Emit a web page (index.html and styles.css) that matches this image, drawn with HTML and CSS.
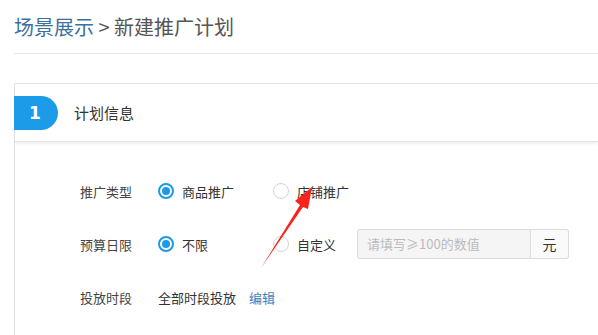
FILE: index.html
```html
<!DOCTYPE html>
<html lang="zh-CN">
<head>
<meta charset="utf-8">
<title>新建推广计划</title>
<link rel="stylesheet" href="styles.css">
</head>
<body>
<div class="page">
  <div class="crumb"><span class="crumb-link">场景展示</span><span class="crumb-cur"> &gt; 新建推广计划</span></div>
  <div class="card">
    <div class="card-head">
      <div class="step">1</div>
      <div class="step-title">计划信息</div>
    </div>
    <div class="form">
      <div class="row">
        <div class="label">推广类型</div>
        <div class="opt"><span class="radio on"></span><span>商品推广</span></div>
        <div class="opt"><span class="radio"></span><span>店铺推广</span></div>
      </div>
      <div class="row">
        <div class="label">预算日限</div>
        <div class="opt"><span class="radio on"></span><span>不限</span></div>
        <div class="opt opt-short"><span class="radio"></span><span>自定义</span></div>
        <div class="group">
          <div class="input">请填写≥100的数值</div>
          <div class="addon">元</div>
        </div>
      </div>
      <div class="row">
        <div class="label">投放时段</div>
        <span class="val">全部时段投放</span><span class="link">编辑</span>
      </div>
    </div>
  </div>
</div>
<svg class="arrow" width="598" height="335" viewBox="0 0 598 335">
  <polygon points="261,268 300,205 295,201 312,187 308,209 303,207" fill="#f7241b"/>
</svg>
</body>
</html>
```
FILE: styles.css
```css
html, body {
  margin: 0;
  padding: 0;
  background: #fff;
  overflow: hidden;
}
body {
  width: 598px;
  height: 335px;
  position: relative;
  font-family: "Noto Sans CJK SC", "Noto Sans", sans-serif;
  color: #333;
}
.page {
  padding-left: 14px;
}
.crumb {
  padding-top: 14px;
  height: 54px;
  box-sizing: border-box;
  line-height: 25px;
  font-size: 20px;
  border-bottom: 1px solid #e6e6e6;
}
.crumb-link { color: #3d6f9f; }
.crumb-cur { color: #555; }
.card {
  margin-top: 29px;
  border-top: 1px solid #e3e3e3;
  border-left: 1px solid #e3e3e3;
}
.card-head {
  height: 57px;
  display: flex;
  align-items: center;
  border-bottom: 1px solid #e3e3e3;
  box-shadow: 0 2px 3px rgba(0, 0, 0, 0.06);
}
.step {
  margin-left: -1px;
  width: 44px;
  height: 34px;
  background: #1b9be8;
  border-radius: 0 17px 17px 0;
  color: #fff;
  font-family: "DejaVu Sans", sans-serif;
  font-weight: bold;
  font-size: 17px;
  line-height: 34px;
  text-align: center;
  box-sizing: border-box;
  padding-right: 2px;
}
.step-title {
  margin-left: 16px;
  font-size: 15px;
  color: #333;
}
.form {
  padding: 34px 0 23px 65px;
}
.row {
  display: flex;
  align-items: center;
  height: 30px;
  margin-bottom: 23px;
  font-size: 13px;
}
.row:last-child { margin-bottom: 0; }
.label {
  width: 78px;
  color: #444;
}
.opt {
  width: 115px;
  display: flex;
  align-items: center;
}
.opt-short { width: 84px; }
.radio {
  width: 16px;
  height: 16px;
  box-sizing: border-box;
  border: 1px solid #d4d4d4;
  border-radius: 50%;
  margin-right: 8px;
  background: #fff;
  position: relative;
}
.radio.on {
  border: 2px solid #1b9be8;
}
.radio.on::after {
  content: "";
  position: absolute;
  left: 2px;
  top: 2px;
  width: 8px;
  height: 8px;
  border-radius: 50%;
  background: #1b9be8;
}
.group {
  display: flex;
  height: 30px;
}
.input {
  width: 174px;
  box-sizing: border-box;
  border: 1px solid #dcdcdc;
  border-radius: 3px 0 0 3px;
  background: #f5f5f5;
  color: #bbb;
  font-size: 13px;
  line-height: 28px;
  padding-left: 9px;
}
.addon {
  width: 38px;
  box-sizing: border-box;
  border: 1px solid #dcdcdc;
  border-left: none;
  border-radius: 0 3px 3px 0;
  background: #fafafa;
  text-align: center;
  line-height: 28px;
  font-size: 14px;
  color: #333;
}
.val { color: #333; }
.link { color: #3a7fc1; margin-left: 13px; }
.arrow {
  position: absolute;
  left: 0;
  top: 0;
  pointer-events: none;
}
```
